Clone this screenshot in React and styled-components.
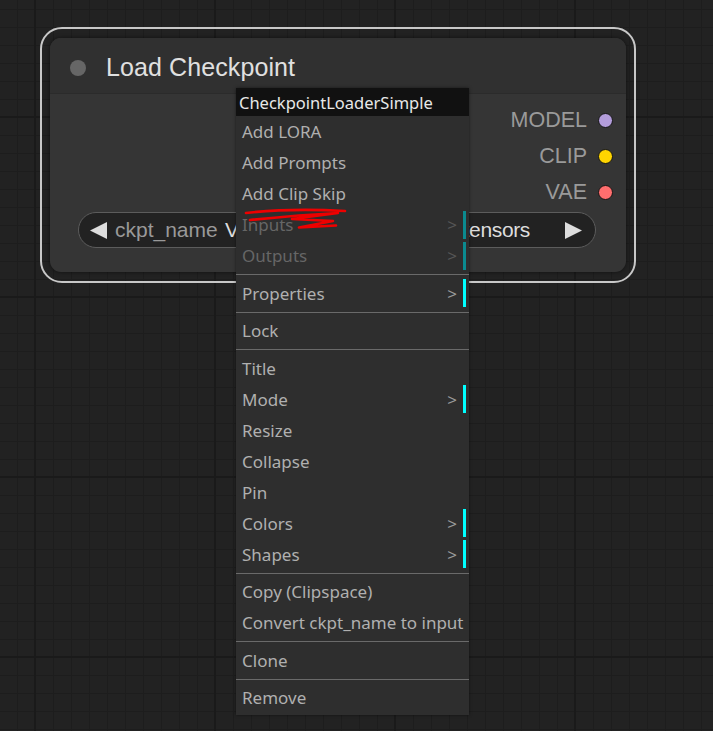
import React from "react";
import styled, { createGlobalStyle } from "styled-components";

const GlobalStyle = createGlobalStyle`
    html, body {
        margin: 0;
        padding: 0;
        background: #222;
    }
`;

const Canvas = styled.div`
    position: relative;
    width: 713px;
    height: 731px;
    overflow: hidden;
    background-color: #222;
    background-image:
        linear-gradient(to right, #1a1a1a 2px, transparent 2px),
        linear-gradient(to bottom, #1a1a1a 2px, transparent 2px),
        linear-gradient(to right, #1d1d1d 1px, transparent 1px),
        linear-gradient(to bottom, #1d1d1d 1px, transparent 1px);
    background-size: 180px 180px, 180px 180px, 18px 18px, 18px 18px;
    background-position: 34px 0, 0 116px, 17px 0, 0 9px;
`;

/* node on the graph canvas */
const Selection = styled.div`
    position: absolute;
    left: 40px;
    top: 27px;
    width: 596px;
    height: 256px;
    box-sizing: border-box;
    border: 2px solid #c8c8c8;
    border-radius: 22px;
    padding: 9px 8px 9px 8px;
`;

const Node = styled.div`
    height: 100%;
    background: #353535;
    border-radius: 11px;
    display: flex;
    flex-direction: column;
    box-shadow: 0 0 4px rgba(0, 0, 0, 0.5);
    overflow: hidden;
    font-family: "Liberation Sans", Arial, sans-serif;
`;

const TitleBar = styled.div`
    height: 56px;
    box-sizing: border-box;
    padding: 4px 0 0 20px;
    background: #303030;
    border-bottom: 1px solid #2b2b2b;
    display: flex;
    align-items: center;
    gap: 20px;
`;

const TitleDot = styled.span`
    width: 16px;
    height: 16px;
    border-radius: 50%;
    background: #666;
`;

const TitleText = styled.span`
    color: #e0e0e0;
    font-size: 25px;
    letter-spacing: 0.1px;
`;

const Outputs = styled.div`
    display: flex;
    flex-direction: column;
    align-items: flex-end;
    padding: 8px 13px 0 0;
`;

const OutputRow = styled.div`
    height: 36px;
    display: flex;
    align-items: center;
    gap: 11px;
    color: #9a9a9a;
    font-size: 21.5px;
`;

const Slot = styled.span`
    width: 13px;
    height: 13px;
    border-radius: 50%;
    background: ${(p) => p.$color};
    border: 1px solid #151515;
`;

const Widget = styled.div`
    margin: 2px 30px 0 28px;
    height: 36px;
    box-sizing: border-box;
    border: 1.5px solid #5c5c5c;
    border-radius: 18px;
    background: #222;
    display: flex;
    align-items: center;
    padding: 0 13px 0 11px;
    font-size: 21px;
    white-space: nowrap;
    overflow: hidden;
`;

const WidgetLabel = styled.span`
    color: #999;
    margin-left: 7px;
`;

const WidgetValue = styled.span`
    color: #ddd;
    margin-left: auto;
    margin-right: 34px;
    letter-spacing: -0.35px;
`;

const Arrow = ({ dir }) => (
    <svg width="18" height="17" viewBox="0 0 18 17">
        {dir === "left" ? (
            <polygon points="17,0 17,17 0,8.5" fill="#ddd" />
        ) : (
            <polygon points="1,0 1,17 18,8.5" fill="#ddd" />
        )}
    </svg>
);

/* context menu over the node */
const Menu = styled.div`
    position: absolute;
    left: 236px;
    top: 88px;
    width: 233px;
    background: #2e2e2e;
    padding-bottom: 2px;
    font-family: "Noto Sans", "Open Sans", sans-serif;
    font-size: 17px;
    box-shadow: 0 0 3px rgba(0, 0, 0, 0.5);
`;

const MenuTitle = styled.div`
    height: 28px;
    background: #111;
    color: #e8e8e8;
    display: flex;
    align-items: center;
    padding-left: 3px;
    font-size: 16.5px;
`;

const MenuItem = styled.div`
    height: 31px;
    display: flex;
    align-items: center;
    padding: 0 3px 0 6px;
    color: ${(p) => (p.$disabled ? "#666" : "#b0b0b0")};
`;

const ItemLabel = styled.span`
    flex: 1;
    white-space: nowrap;
`;

const SubArrow = styled.span`
    color: ${(p) => (p.$disabled ? "#555" : "#999")};
    margin-right: 6px;
`;

const SubBar = styled.span`
    width: 3px;
    height: 28px;
    background: ${(p) => (p.$disabled ? "#0b8a8f" : "#00ffff")};
`;

const Separator = styled.div`
    height: 1px;
    background: #6a6a6a;
    margin: 3px 0 2.5px;
`;

const Scribble = styled.svg`
    position: absolute;
    left: 0;
    top: 0;
    pointer-events: none;
`;

const menuItems = [
    { label: "Add LORA" },
    { label: "Add Prompts" },
    { label: "Add Clip Skip" },
    { label: "Inputs", sub: true, disabled: true },
    { label: "Outputs", sub: true, disabled: true },
    { sep: true },
    { label: "Properties", sub: true },
    { sep: true },
    { label: "Lock" },
    { sep: true },
    { label: "Title" },
    { label: "Mode", sub: true },
    { label: "Resize" },
    { label: "Collapse" },
    { label: "Pin" },
    { label: "Colors", sub: true },
    { label: "Shapes", sub: true },
    { sep: true },
    { label: "Copy (Clipspace)" },
    { label: "Convert ckpt_name to input" },
    { sep: true },
    { label: "Clone" },
    { sep: true },
    { label: "Remove" },
];

const outputs = [
    { name: "MODEL", color: "#b39ddb" },
    { name: "CLIP", color: "#ffd500" },
    { name: "VAE", color: "#ff6e6e" },
];

const App = () => {
    return (
        <>
            <GlobalStyle />
            <Canvas>
                <Selection>
                    <Node>
                        <TitleBar>
                            <TitleDot />
                            <TitleText>Load Checkpoint</TitleText>
                        </TitleBar>
                        <Outputs>
                            {outputs.map((o) => (
                                <OutputRow key={o.name}>
                                    {o.name}
                                    <Slot $color={o.color} />
                                </OutputRow>
                            ))}
                        </Outputs>
                        <Widget>
                            <Arrow dir="left" />
                            <WidgetLabel>ckpt_name</WidgetLabel>
                            <WidgetValue>V1-5-pruned-emaonly.safetensors</WidgetValue>
                            <Arrow dir="right" />
                        </Widget>
                    </Node>
                </Selection>

                <Menu>
                    <MenuTitle>CheckpointLoaderSimple</MenuTitle>
                    {menuItems.map((it, idx) =>
                        it.sep ? (
                            <Separator key={idx} />
                        ) : (
                            <MenuItem key={idx} $disabled={it.disabled}>
                                <ItemLabel>{it.label}</ItemLabel>
                                {it.sub && (
                                    <>
                                        <SubArrow $disabled={it.disabled}>&gt;</SubArrow>
                                        <SubBar $disabled={it.disabled} />
                                    </>
                                )}
                            </MenuItem>
                        )
                    )}
                </Menu>

                <Scribble width="713" height="731">
                    <g fill="none" stroke="#ee0000" strokeWidth="2.6" strokeLinecap="round" strokeLinejoin="round">
                        <path d="M246 213 Q 290 208 345 211" />
                        <path d="M250 220 Q 300 215 338 213 L 292 219 L 333 221 L 299 227.5 L 336 225.5" />
                    </g>
                </Scribble>
            </Canvas>
        </>
    );
};

export default App;
